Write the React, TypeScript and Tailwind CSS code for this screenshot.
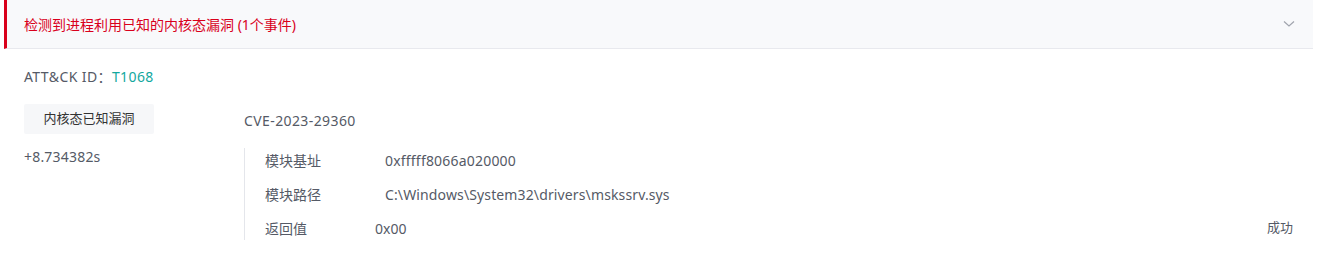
import React from "react";

const font = { fontFamily: '"Noto Sans", "Noto Sans CJK SC", sans-serif' };

export default function App() {
  return (
    <div className="w-[1328px] h-[256px] bg-white" style={font}>
      <div className="w-[1309px] ml-[4px]">
        <div className="h-[49px] bg-[#f8f9fb] border-l-[3px] border-[#d9001b] border-b border-b-[#e8e9ee] flex items-center justify-between pl-[17px] pr-[18px]">
          <span className="text-[14px] text-[#d9001b]">检测到进程利用已知的内核态漏洞 (1个事件)</span>
          <svg width="12" height="8" viewBox="0 0 12 8">
            <path d="M1 1.5 L6 6 L11 1.5" fill="none" stroke="#a0a4ad" strokeWidth="1.2" />
          </svg>
        </div>
        <div className="pl-[20px] pt-[18px]">
          <div className="text-[14px] text-[#555a66] leading-[20px] tracking-[0.4px]">
            ATT&amp;CK ID：<span className="text-[#13a89e]">T1068</span>
          </div>
          <div className="flex items-center mt-[17px]">
            <div className="w-[130px] h-[30px] bg-[#f6f7f9] rounded-[2px] flex items-center justify-center text-[13px] text-[#333]">内核态已知漏洞</div>
            <div className="ml-[90px] mt-[3px] text-[14px] text-[#555a66] tracking-[0.4px]">CVE-2023-29360</div>
          </div>
          <div className="flex mt-[14px]">
            <div className="w-[220px] text-[14px] text-[#555a66] leading-[20px] -mt-[1px] tracking-[0.2px]">+8.734382s</div>
            <div className="flex-1 border-l border-[#e4e6eb] pl-[20px] pr-[20px] text-[14px] text-[#555a66] h-[92px]">
              <div className="flex items-center h-[20px] mt-[2px]">
                <span className="w-[120px]">模块基址</span>
                <span className="tracking-[0.2px]">0xfffff8066a020000</span>
              </div>
              <div className="flex items-center h-[20px] mt-[14px]">
                <span className="w-[120px]">模块路径</span>
                <span className="tracking-[0.13px]">C:\Windows\System32\drivers\mskssrv.sys</span>
              </div>
              <div className="flex items-center h-[20px] mt-[14px]">
                <span className="w-[110px]">返回值</span>
                <span className="flex-1">0x00</span>
                <span className="text-[13px] text-[#555a66]">成功</span>
              </div>
            </div>
          </div>
        </div>
      </div>
    </div>
  );
}
